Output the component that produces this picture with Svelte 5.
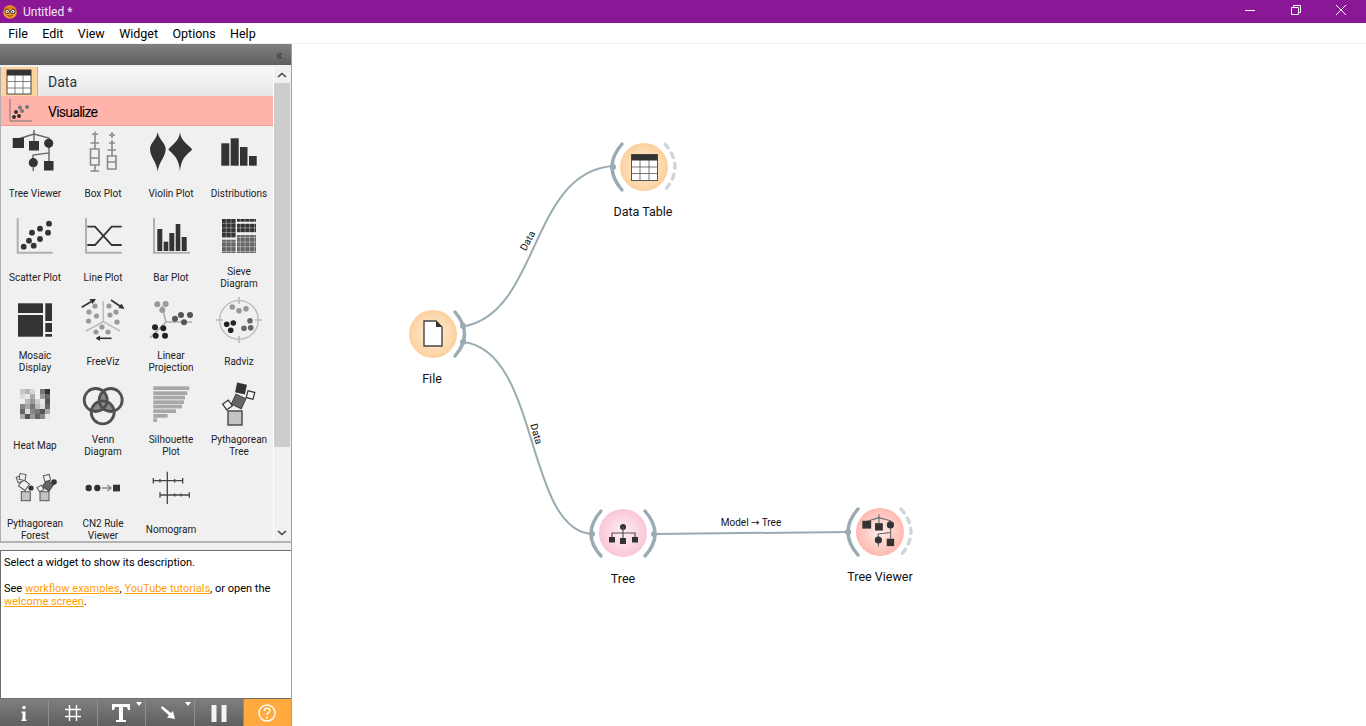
<script>
	const menus = ['File', 'Edit', 'View', 'Widget', 'Options', 'Help'];

	const widgets = [
		{ id: 'treeviewer', label: ['Tree Viewer'] },
		{ id: 'boxplot', label: ['Box Plot'] },
		{ id: 'violin', label: ['Violin Plot'] },
		{ id: 'distributions', label: ['Distributions'] },
		{ id: 'scatter', label: ['Scatter Plot'] },
		{ id: 'line', label: ['Line Plot'] },
		{ id: 'bar', label: ['Bar Plot'] },
		{ id: 'sieve', label: ['Sieve', 'Diagram'] },
		{ id: 'mosaic', label: ['Mosaic', 'Display'] },
		{ id: 'freeviz', label: ['FreeViz'] },
		{ id: 'linear', label: ['Linear', 'Projection'] },
		{ id: 'radviz', label: ['Radviz'] },
		{ id: 'heatmap', label: ['Heat Map'] },
		{ id: 'venn', label: ['Venn', 'Diagram'] },
		{ id: 'silhouette', label: ['Silhouette', 'Plot'] },
		{ id: 'pythagorean', label: ['Pythagorean', 'Tree'] },
		{ id: 'forest', label: ['Pythagorean', 'Forest'] },
		{ id: 'cn2', label: ['CN2 Rule', 'Viewer'] },
		{ id: 'nomogram', label: ['Nomogram'] }
	];

	// grey values of the little heat map icon, row by row
	const heat = [
		['#c8c8c8', '#b4b4b4', '#d8d8d8', '#f0f0f0', '#777', '#333'],
		['#dcdcdc', '#e8e8e8', '#aaa', '#f0f0f0', '#999', '#666'],
		['#f0f0f0', '#bbb', '#999', '#ccc', '#e8e8e8', '#555'],
		['#888', '#aaa', '#777', '#bbb', '#ddd', '#666'],
		['#666', '#ddd', '#888', '#777', '#555', '#aaa'],
		['#aaa', '#555', '#999', '#666', '#888', '#e8e8e8']
	];

	const silhouette = [
		[6.3, 36], [11.3, 34], [15.7, 31.7], [20.3, 30.7],
		[24.7, 28.7], [29.3, 22.7], [34, 14.3], [38.3, 3.7]
	];

	const scatterDots = [[38, 11.7], [29, 16.7], [21, 20.7], [37, 20.7], [29, 27], [18, 28.7], [12.7, 34.7], [22.7, 33.7]];
	const freevizDots = [[16, 10], [30, 10], [10, 16], [37, 16], [17.5, 20], [31, 19], [9.5, 25], [38, 26], [23, 31], [17, 36], [29, 36]];
</script>

{#snippet arrow(x1, y1, x2, y2)}
	<line {x1} {y1} {x2} {y2} stroke="#333" stroke-width="1.6" />
{/snippet}

{#snippet treeGlyph()}
	<path d="M23 2V13M7 11L23 6L38 10V16M38 16V25L22 27V32" fill="none" stroke="#666" stroke-width="1.4" />
	<rect x="1.7" y="10" width="11.3" height="10" fill="#333" />
	<rect x="18" y="13" width="10" height="9.5" fill="#333" />
	<circle cx="37.7" cy="15.3" r="4.6" fill="#333" />
	<path d="M38 25V33" stroke="#666" stroke-width="1.4" />
	<circle cx="22.3" cy="34.7" r="4.6" fill="#333" />
	<line x1="22.3" y1="38" x2="22.3" y2="43" stroke="#666" stroke-width="1.4" />
	<rect x="33" y="33" width="9.5" height="9.5" fill="#333" />
{/snippet}

{#snippet icon(id)}
	<svg class="widget-icon" viewBox="0 0 48 48" width="48" height="48">
		{#if id === 'treeviewer'}
			{@render treeGlyph()}
		{:else if id === 'boxplot'}
			<g fill="none" stroke="#8a8a8a" stroke-width="1.6">
				<path d="M13 6.3H19M16 3.5V9M16 9V21M11.5 15H20M11.5 21H20V37H11.5ZM11.5 30H20M16 37V43M11.5 43H20" />
				<path d="M30 7H36M33 4V10M30 15H36M33 12V18M33 18V28M28.5 22H37M28.5 28H37V41H28.5ZM28.5 34H37" />
			</g>
		{:else if id === 'violin'}
			<path d="M10.7 3.7C11.2 11 18.7 15 18.7 21C18.7 29 11.5 34 10.7 43.7C9.9 34 3 29 3 21C3 15 10.2 11 10.7 3.7Z" fill="#333" />
			<path d="M33 3.7C33.5 13 41 16 45.3 21.5C41 26 34 29 33 43.7C32 29 25.5 26 21.3 21.5C25.5 16 32.5 13 33 3.7Z" fill="#333" />
		{:else if id === 'distributions'}
			<g fill="#333">
				<rect x="6.3" y="15.3" width="8" height="22.4" />
				<rect x="15.7" y="10.3" width="8" height="27.4" />
				<rect x="25" y="19" width="7.5" height="18.7" />
				<rect x="34" y="28" width="7.7" height="9.7" />
			</g>
		{:else if id === 'scatter'}
			<path d="M6.7 6.3V40.7H41.7" fill="none" stroke="#b0b0b0" stroke-width="2" />
			{#each scatterDots as d}
				<circle cx={d[0]} cy={d[1]} r="2.9" fill="#333" />
			{/each}
		{:else if id === 'line'}
			<path d="M7 6.3V40.7H42.7" fill="none" stroke="#b0b0b0" stroke-width="2" />
			<path d="M8.3 14.7H16L32.7 33H42.7M8.3 33H16L32.7 14.7H42.7" fill="none" stroke="#333" stroke-width="1.8" />
		{:else if id === 'bar'}
			<path d="M7 6.3V40.7H43" fill="none" stroke="#b0b0b0" stroke-width="2" />
			<g fill="#333">
				<rect x="10.3" y="17" width="5" height="22" />
				<rect x="16.7" y="29.7" width="4.6" height="9.3" />
				<rect x="22.3" y="21" width="5" height="18" />
				<rect x="28.7" y="12" width="4.6" height="27" />
				<rect x="34.7" y="25" width="5" height="14" />
			</g>
		{:else if id === 'sieve'}
			<defs>
				<pattern id="sieve-grid" width="4.7" height="4.7" patternUnits="userSpaceOnUse" x="7" y="7">
					<path d="M4.7 0V4.7M0 4.7H4.7" fill="none" stroke="#f0f0f0" stroke-width="0.8" />
				</pattern>
			</defs>
			<rect x="7" y="7" width="14" height="18.7" fill="#333" />
			<rect x="22" y="7" width="19" height="2.7" fill="#333" />
			<rect x="22" y="11.7" width="19" height="8.6" fill="#333" />
			<rect x="7" y="27.7" width="14" height="13.3" fill="#666" />
			<rect x="22" y="23" width="19" height="18" fill="#666" />
			<rect x="7" y="7" width="34" height="34" fill="url(#sieve-grid)" />
		{:else if id === 'mosaic'}
			<g fill="#333">
				<rect x="7" y="7.3" width="25" height="9.7" />
				<rect x="7" y="19" width="25" height="21.7" />
				<rect x="34.3" y="7.3" width="6.7" height="17.7" />
				<rect x="34.3" y="27" width="6.7" height="9" />
				<rect x="34.3" y="38" width="6.7" height="2.7" />
			</g>
		{:else if id === 'freeviz'}
			<path d="M24.3 5V25.7L7 35M24.3 25.7L41 35" fill="none" stroke="#bbb" stroke-width="1.5" />
			{#each freevizDots as d}
				<circle cx={d[0]} cy={d[1]} r="2.6" fill="#999" />
			{/each}
			{@render arrow(2.7, 11.3, 15, 4)}
			<path d="M17 3L10.5 3L13.5 8Z" fill="#333" />
			{@render arrow(32, 4, 43, 11.5)}
			<path d="M45.5 13L39.5 12L42.5 7.5Z" fill="#333" />
			{@render arrow(32.5, 42.3, 18, 42.3)}
			<path d="M16.5 42.3L21 39.5V45Z" fill="#333" />
		{:else if id === 'linear'}
			<path d="M3 42L19 26L15 10M19 26L45 26" fill="none" stroke="#aaa" stroke-width="1.5" />
			<g fill="#999">
				<circle cx="10.3" cy="8.3" r="3" />
				<circle cx="18.7" cy="8" r="3" />
				<circle cx="15.3" cy="14" r="3" />
			</g>
			<g fill="#555">
				<circle cx="28" cy="22.7" r="3" />
				<circle cx="34" cy="19" r="3" />
				<circle cx="43" cy="19" r="3" />
				<circle cx="37" cy="26.3" r="3" />
			</g>
			<g fill="#222">
				<circle cx="8" cy="31.3" r="3" />
				<circle cx="16.3" cy="32.3" r="3" />
				<circle cx="8.7" cy="39.7" r="3" />
				<circle cx="18" cy="39.7" r="3" />
			</g>
		{:else if id === 'radviz'}
			<circle cx="24" cy="24" r="19.3" fill="none" stroke="#b8b8b8" stroke-width="1.3" />
			<path d="M24 1V8M24 40V47M1 24H8M40 24H47" stroke="#b8b8b8" stroke-width="1.6" />
			<g fill="#999">
				<circle cx="17.3" cy="11" r="2.8" />
				<circle cx="24" cy="14.7" r="2.8" />
				<circle cx="31" cy="12.7" r="2.8" />
			</g>
			<g fill="#222">
				<circle cx="11.7" cy="28.3" r="2.8" />
				<circle cx="18.3" cy="27" r="2.8" />
				<circle cx="15.7" cy="34.3" r="2.8" />
			</g>
			<g fill="#666">
				<circle cx="35" cy="24.7" r="2.8" />
				<circle cx="29" cy="32.3" r="2.8" />
				<circle cx="35.7" cy="31.7" r="2.8" />
			</g>
		{:else if id === 'heatmap'}
			{#each heat as row, r}
				{#each row as c, k}
					<rect x={9 + k * 5} y={9 + r * 5} width="5" height="5" fill={c} />
				{/each}
			{/each}
		{:else if id === 'venn'}
			<defs>
				<clipPath id="venn-a"><circle cx="16.7" cy="20" r="11.5" /></clipPath>
				<clipPath id="venn-b"><circle cx="31.7" cy="20" r="11.5" /></clipPath>
			</defs>
			<circle cx="31.7" cy="20" r="11.5" fill="#8a8a8a" clip-path="url(#venn-a)" />
			<circle cx="23.7" cy="32.3" r="11.5" fill="#8a8a8a" clip-path="url(#venn-a)" />
			<circle cx="23.7" cy="32.3" r="11.5" fill="#8a8a8a" clip-path="url(#venn-b)" />
			<g fill="none" stroke="#505050" stroke-width="2.8">
				<circle cx="16.7" cy="20" r="11.5" />
				<circle cx="31.7" cy="20" r="11.5" />
				<circle cx="23.7" cy="32.3" r="11.5" />
			</g>
		{:else if id === 'silhouette'}
			{#each silhouette as s}
				<rect x="6.3" y={s[0]} width={s[1]} height="3.7" fill="#a8a8a8" />
			{/each}
		{:else if id === 'pythagorean'}
			<rect x="13" y="31" width="14" height="14" fill="#c4c4c4" stroke="#444" stroke-width="1.4" />
			<rect x="18" y="16" width="11" height="11" fill="#666" stroke="#444" transform="rotate(25 23.7 21.7)" />
			<rect x="9" y="21.5" width="7" height="7" fill="#f4f4f4" stroke="#333" stroke-width="1.2" transform="rotate(-35 12.5 25)" />
			<rect x="21" y="3.5" width="10" height="10" fill="#333" transform="rotate(12 26 8.5)" />
			<rect x="32" y="11.5" width="7" height="7" fill="#f4f4f4" stroke="#333" stroke-width="1.2" transform="rotate(15 35.5 15)" />
		{:else if id === 'forest'}
			<rect x="10.3" y="27.7" width="9" height="9" fill="#c4c4c4" stroke="#555" />
			<rect x="9" y="17" width="8" height="8" fill="#f0f0f0" stroke="#555" transform="rotate(35 13 21)" />
			<rect x="6" y="12" width="6" height="6" fill="#f0f0f0" stroke="#555" transform="rotate(-20 9 15)" />
			<rect x="8.5" y="10" width="6" height="6" fill="#f0f0f0" stroke="#555" transform="rotate(10 11.5 13)" />
			<circle cx="20" cy="24" r="2.6" fill="#333" />
			<rect x="29" y="27.7" width="9" height="9" fill="#c4c4c4" stroke="#555" />
			<rect x="33" y="17.5" width="8" height="8" fill="#666" stroke="#444" transform="rotate(35 37 21.5)" />
			<rect x="27" y="22" width="5" height="5" fill="#f0f0f0" stroke="#555" transform="rotate(-30 29.5 24.5)" />
			<rect x="33" y="11" width="6" height="6" fill="#f0f0f0" stroke="#555" transform="rotate(-15 36 14)" />
			<circle cx="43" cy="18" r="2.8" fill="#333" />
		{:else if id === 'cn2'}
			<circle cx="9.7" cy="24" r="3.2" fill="#333" />
			<circle cx="18.3" cy="24" r="3.2" fill="#333" />
			<path d="M23 24H31M28.5 21L32 24L28.5 27" fill="none" stroke="#888" stroke-width="1.5" />
			<rect x="34" y="20.7" width="7" height="6.7" fill="#333" />
		{:else if id === 'nomogram'}
			<path d="M20.3 7.7V40M6.3 16.7H35.7M6.3 14V19.5M13 15V18.5M27.7 15V18.5M35.7 14V19.5M13 31H42.3M13 28.3V33.7M27.7 29.5V32.5M34 29.5V32.5M42.3 28.3V33.7" fill="none" stroke="#444" stroke-width="1.3" />
		{/if}
	</svg>
{/snippet}

{#snippet tableGlyph(size, frame)}
	<svg viewBox="0 0 26 26" width={size} height={size}>
		<rect x="1" y="1" width="24" height="24" fill="#fff" stroke={frame} stroke-width="1" />
		<rect x="1" y="1" width="24" height="5.5" fill="#333" />
		<path d="M9 6V25M17 6V25M1 12.5H25M1 19H25" stroke="#666" stroke-width="0.8" fill="none" />
	</svg>
{/snippet}

<div class="window">
	<header class="titlebar">
		<svg class="logo" viewBox="0 0 16 16" width="16" height="16">
			<circle cx="8" cy="8" r="6.8" fill="#f59a23" />
			<path d="M2 5.5Q8 2 14 5.5" fill="none" stroke="#d9681c" stroke-width="1.6" />
			<circle cx="5.2" cy="7.6" r="2.2" fill="#fff" stroke="#333" stroke-width="1" />
			<circle cx="10.8" cy="7.6" r="2.2" fill="#fff" stroke="#333" stroke-width="1" />
			<circle cx="5.4" cy="7.7" r="0.8" fill="#333" />
			<circle cx="10.6" cy="7.7" r="0.8" fill="#333" />
			<path d="M5.5 11.5Q8 13 10.5 11.5" fill="none" stroke="#7a4310" stroke-width="1" />
		</svg>
		<span class="title">Untitled *</span>
		<div class="window-buttons">
			<span class="winbtn">
				<svg viewBox="0 0 10 10" width="10" height="10"><path d="M0 5.5H10" stroke="#fff" /></svg>
			</span>
			<span class="winbtn">
				<svg viewBox="0 0 10 10" width="10" height="10"><path d="M0.5 2.5H7.5V9.5H0.5ZM2.5 2V0.5H9.5V7.5H8" fill="none" stroke="#fff" /></svg>
			</span>
			<span class="winbtn">
				<svg viewBox="0 0 10 10" width="10" height="10"><path d="M0 0L10 10M10 0L0 10" stroke="#fff" /></svg>
			</span>
		</div>
	</header>

	<nav class="menubar">
		{#each menus as m}
			<span class="menu-item">{m}</span>
		{/each}
	</nav>

	<div class="body">
		<aside class="dock">
			<div class="dock-head"><span class="collapse">«</span></div>

			<div class="toolbox">
				<div class="toolbox-main">
					<div class="tab tab-data">
						<span class="tab-icon">{@render tableGlyph(26, '#444')}</span>
						<span class="tab-label">Data</span>
					</div>
					<div class="tab tab-visualize">
						<span class="tab-icon">
							<svg viewBox="0 0 26 26" width="26" height="26">
								<path d="M3 1V23H25" fill="none" stroke="#777" stroke-width="1" />
								<g fill="#333">
									<circle cx="7" cy="19" r="2" />
									<circle cx="12" cy="18" r="2" />
									<circle cx="9" cy="14" r="2" />
								</g>
								<g fill="#777">
									<circle cx="15" cy="13" r="2" />
									<circle cx="13" cy="9.5" r="2" />
									<circle cx="20" cy="9" r="2" />
								</g>
							</svg>
						</span>
						<span class="tab-label">Visualize</span>
					</div>
					<div class="grid">
						{#each widgets as w}
							<div class="widget">
								{@render icon(w.id)}
								<div class="widget-label">
									{#each w.label as line}
										<span>{line}</span>
									{/each}
								</div>
							</div>
						{/each}
					</div>
				</div>
				<div class="scrollbar">
					<svg class="chev" viewBox="0 0 10 6" width="10" height="6"><path d="M1 5L5 1.5L9 5" fill="none" stroke="#444" stroke-width="1.6" /></svg>
					<div class="track"><div class="thumb"></div></div>
					<svg class="chev" viewBox="0 0 10 6" width="10" height="6"><path d="M1 1L5 4.5L9 1" fill="none" stroke="#444" stroke-width="1.6" /></svg>
				</div>
			</div>

			<div class="description">
				<p>Select a widget to show its description.</p>
				<p>See <a href="#a">workflow examples</a>, <a href="#b">YouTube tutorials</a>, or open the<br /><a href="#c">welcome screen</a>.</p>
			</div>

			<div class="toolbar">
				<button class="tool">
					<svg viewBox="0 0 20 20" width="20" height="20"><path d="M8.5 3H11.5V6H8.5ZM8.5 8.5H11.5V16.5H12.5V18H7.5V16.5H8.5V10H7.5V8.5Z" fill="#fff" /></svg>
				</button>
				<button class="tool">
					<svg viewBox="0 0 20 20" width="20" height="20"><path d="M6.5 2V18M13.5 2V18M2 6.5H18M2 13.5H18" stroke="#fff" stroke-width="1.4" /></svg>
				</button>
				<button class="tool menu-tool">
					<svg viewBox="0 0 24 24" width="24" height="24"><path d="M3 3H21V9H19L18 6H14V19H17V21H7V19H10V6H6L5 9H3Z" fill="#fff" /></svg>
				</button>
				<button class="tool menu-tool">
					<svg viewBox="0 0 20 20" width="20" height="20"><path d="M2 3L11 10L13 8L15 16L7 14.5L9 12.5L1 5Z" fill="#fff" /></svg>
				</button>
				<button class="tool">
					<svg viewBox="0 0 20 20" width="20" height="20"><path d="M2.5 2H7.5V19H2.5ZM12.5 2H17.5V19H12.5Z" fill="#f4f4f4" /></svg>
				</button>
				<button class="tool help">
					<svg viewBox="0 0 20 20" width="20" height="20">
						<circle cx="10" cy="10" r="8" fill="none" stroke="#fff" stroke-width="1.4" />
						<path d="M7.3 8Q7.4 5.3 10 5.3Q12.8 5.3 12.8 7.7Q12.8 9 11 10.1Q10 10.7 10 12" fill="none" stroke="#fff" stroke-width="1.4" />
						<circle cx="10" cy="14.4" r="1" fill="#fff" />
					</svg>
				</button>
			</div>
		</aside>

		<main class="canvas">
			<svg class="links" viewBox="0 0 1074 683" width="1074" height="683">
				<!-- canvas origin is 292,44 on the page -->
				<g transform="translate(-292 -44)">
					<g fill="none" stroke="#9aabb3" stroke-width="2">
						<path d="M466 326C540 310 530 172 613 166" />
						<path d="M463 342C540 350 525 530 592 534" />
						<path d="M654 534L848 532" />
					</g>

					<g fill="none" stroke="#9aabb3" stroke-width="3.4" stroke-linecap="round">
						<path d="M455 312Q474 334 455 356" />
						<path d="M622 144Q602 167 622 190" />
						<path d="M601 511Q581 534 601 556" />
						<path d="M645 511Q665 534 645 556" />
						<path d="M858 509Q838 532 858 555" />
					</g>
					<g fill="none" stroke="#ced6da" stroke-width="3.4" stroke-linecap="round" stroke-dasharray="5 6">
						<path d="M665 144Q685 167 665 190" />
						<path d="M901 509Q921 532 901 555" />
					</g>
					<g fill="#9aabb3">
						<circle cx="463" cy="326" r="3" />
						<circle cx="463" cy="342" r="3" />
						<circle cx="613" cy="167" r="3" />
						<circle cx="592" cy="534" r="3" />
						<circle cx="654" cy="534" r="3" />
						<circle cx="848" cy="532" r="3" />
					</g>

					<defs>
						<radialGradient id="orange-node">
							<stop offset="0" stop-color="#fff0dc" />
							<stop offset="1" stop-color="#fbd19d" />
						</radialGradient>
						<radialGradient id="pink-node">
							<stop offset="0" stop-color="#fff0f5" />
							<stop offset="1" stop-color="#f9c6d8" />
						</radialGradient>
						<radialGradient id="red-node">
							<stop offset="0" stop-color="#ffeeea" />
							<stop offset="1" stop-color="#ffb9b1" />
						</radialGradient>
					</defs>
					<circle cx="433" cy="334" r="24" fill="url(#orange-node)" />
					<circle cx="644" cy="167" r="24" fill="url(#orange-node)" />
					<circle cx="623" cy="533" r="24" fill="url(#pink-node)" />
					<circle cx="880" cy="532" r="24" fill="url(#red-node)" />

					<!-- file -->
					<path d="M424 321H436L442 327V346H424Z" fill="#fff" stroke="#444" stroke-width="1.4" />
					<path d="M436 321L442 327H436Z" fill="#333" />

					<!-- data table -->
					<g transform="translate(631 154)">
						<rect x="0.5" y="0.5" width="26" height="26" fill="#fff" stroke="#555" />
						<rect x="0.5" y="0.5" width="26" height="6" fill="#333" />
						<path d="M9 6V26M18 6V26M1 13H26M1 19.5H26" stroke="#555" stroke-width="0.8" fill="none" />
					</g>

					<!-- tree -->
					<circle cx="623" cy="527" r="3" fill="#333" />
					<path d="M623 527V541M612 538V533H635V538" fill="none" stroke="#555" stroke-width="1.2" />
					<g fill="#333">
						<rect x="609" y="537" width="6" height="5.5" />
						<rect x="620" y="538" width="6" height="6" />
						<rect x="632" y="537" width="6" height="5.5" />
					</g>

					<!-- tree viewer -->
					<g transform="translate(861 513) scale(0.78)">
						{@render treeGlyph()}
					</g>

					<g class="link-label">
						<text transform="translate(528 241) rotate(-62)" text-anchor="middle" dy="3">Data</text>
						<text transform="translate(536 434) rotate(74)" text-anchor="middle" dy="3">Data</text>
						<text x="751" y="526" text-anchor="middle">Model <tspan class="link-arrow">→</tspan> Tree</text>
					</g>
					<g class="node-label">
						<text x="643" y="216" text-anchor="middle">Data Table</text>
						<text x="432" y="383" text-anchor="middle">File</text>
						<text x="623" y="583" text-anchor="middle">Tree</text>
						<text x="880" y="581" text-anchor="middle">Tree Viewer</text>
					</g>
				</g>
			</svg>
		</main>
	</div>
</div>

<style>
	:global(body) {
		margin: 0;
		background: #fff;
		overflow: hidden;
	}

	.window {
		width: 1366px;
		height: 726px;
		display: flex;
		flex-direction: column;
		font-family: Roboto, "Open Sans", sans-serif;
		color: #000;
	}

	.titlebar {
		height: 23px;
		flex: none;
		background: #8a1795;
		color: #fff;
		display: flex;
		align-items: center;
		padding-left: 2px;
	}

	.logo {
		margin-right: 5px;
	}

	.title {
		font-size: 12px;
		color: #f4e6f6;
	}

	.window-buttons {
		margin-left: auto;
		margin-top: -3px;
		padding-right: 2px;
		display: flex;
	}

	.winbtn {
		width: 45.5px;
		display: flex;
		justify-content: center;
		align-items: center;
	}

	.menubar {
		height: 20px;
		box-sizing: content-box;
		flex: none;
		display: flex;
		align-items: center;
		background: #fff;
		border-bottom: 1px solid #f0f0f0;
		padding-left: 1px;
	}

	.menu-item {
		font-size: 12.5px;
		padding: 0 7.2px;
	}

	.body {
		flex: 1;
		display: flex;
		min-height: 0;
	}

	.dock {
		width: 291px;
		flex: none;
		display: flex;
		flex-direction: column;
		background: #f0f0f0;
		border-right: 1px solid #a0a0a0;
	}

	.dock-head {
		height: 21px;
		flex: none;
		background: linear-gradient(#808080, #5f5f5f);
		display: flex;
		align-items: center;
		justify-content: flex-end;
		padding-right: 8px;
	}

	.collapse {
		color: #3c3c3c;
		font-size: 16px;
		line-height: 1;
	}

	.toolbox {
		height: 476px;
		flex: none;
		display: flex;
		border-left: 1px solid #b0b0b0;
		border-bottom: 2px solid #b4b4b4;
		box-sizing: border-box;
		margin-top: 2px;
	}

	.toolbox-main {
		width: 272px;
		flex: none;
		display: flex;
		flex-direction: column;
		overflow: hidden;
	}

	.tab {
		display: flex;
		align-items: center;
		flex: none;
	}

	.tab-icon {
		width: 37px;
		box-sizing: border-box;
		display: flex;
		align-items: center;
		justify-content: center;
		height: 100%;
	}

	.tab-label {
		margin-left: 10px;
		font-size: 14px;
	}

	.tab-data {
		height: 29px;
		background: linear-gradient(#f8f8f8, #e6e6e6);
		color: #26364a;
	}

	.tab-data .tab-icon {
		background: #fdd3a0;
		border-right: 1px solid #b4b4b4;
	}

	.tab-visualize {
		height: 30px;
		background: #ffb3ab;
		border-bottom: 1px solid #ef9f98;
		box-sizing: border-box;
	}

	.tab-visualize .tab-label {
		letter-spacing: -0.75px;
		padding-top: 2px;
	}

	.grid {
		display: grid;
		grid-template-columns: repeat(4, 68px);
		grid-auto-rows: 84px;
	}

	.widget {
		position: relative;
		display: flex;
		flex-direction: column;
		align-items: center;
		padding-top: 2px;
	}

	.widget-icon {
		flex: none;
	}

	.widget-label {
		height: 30px;
		margin-top: 3px;
		display: flex;
		flex-direction: column;
		align-items: center;
		justify-content: center;
		font-size: 10px;
		line-height: 12px;
		color: #222;
		white-space: nowrap;
	}

	.scrollbar {
		width: 18px;
		flex: none;
		box-sizing: border-box;
		border-left: 1px solid #fff;
		padding-right: 1px;
		display: flex;
		flex-direction: column;
		align-items: center;
		background: #f0f0f0;
	}

	.chev {
		flex: none;
		margin: 5px 0;
	}

	.track {
		flex: 1;
		width: 100%;
	}

	.thumb {
		height: 364px;
		background: #cdcdcd;
	}

	.description {
		height: 149px;
		flex: none;
		box-sizing: border-box;
		margin-top: 7px;
		background: #fff;
		border: 1px solid #6e6e6e;
		border-right: 0;
		padding: 5px 3px;
		font-size: 11px;
		line-height: 13px;
	}

	.description p {
		margin: 0 0 13px;
	}

	.description a {
		color: #ffa000;
	}

	.toolbar {
		height: 27px;
		flex: none;
		display: flex;
		background: linear-gradient(#7f7f7f, #5f5f5f);
	}

	.tool {
		position: relative;
		width: 48.8px;
		flex: none;
		padding: 0;
		background: none;
		border: 0;
		border-right: 1px solid #8f8f8f;
		display: flex;
		align-items: center;
		justify-content: center;
	}

	.menu-tool::after {
		content: '';
		position: absolute;
		top: 3px;
		right: 3px;
		border: 3px solid transparent;
		border-top: 4px solid #fff;
		border-bottom: 0;
	}

	.help {
		flex: 1;
		background: #ffa93f;
		border-right: 0;
	}

	.canvas {
		flex: 1;
		position: relative;
		background: #fff;
		min-width: 0;
	}

	.links {
		position: absolute;
		left: 0;
		top: 0;
	}

	.link-label {
		font-size: 10px;
		fill: #111;
	}

	.link-arrow {
		font-family: "DejaVu Sans", sans-serif;
	}

	.node-label {
		font-size: 12.5px;
		fill: #111;
	}
</style>
